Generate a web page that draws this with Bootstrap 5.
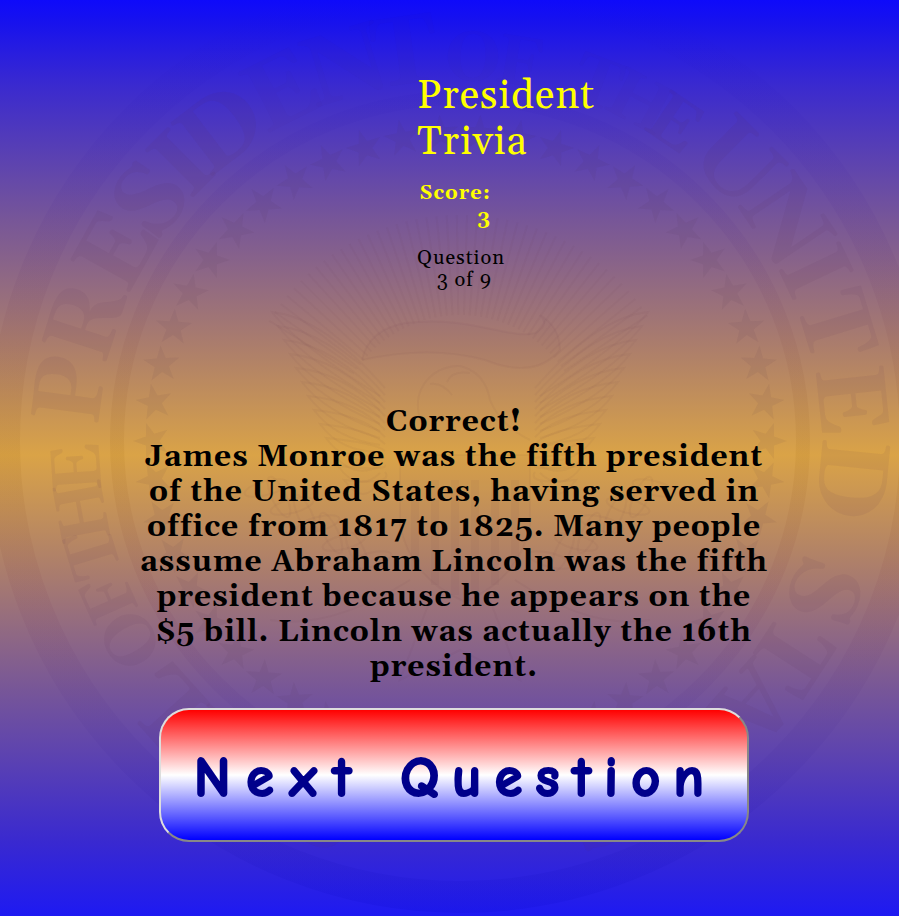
<!DOCTYPE html>
<html lang="en">
<head>
<meta charset="utf-8">
<title>President Trivia</title>
<link href="https://cdn.jsdelivr.net/npm/bootstrap@5.3.0/dist/css/bootstrap.min.css" rel="stylesheet">
<style>
body{min-height:916px;background:linear-gradient(#0e0afa 0,#1611ef 20px,#3929d0 83px,#775698 220px,#ab7d6c 345px,#daa347 455px,#ab7d6c 570px,#775698 690px,#3929d0 842px,#1e1af2 916px);font-family:Georgia,Gelasio,"Liberation Serif",serif;letter-spacing:1px;color:#000;overflow:hidden}
.seal{left:0;top:0;width:899px;height:916px;z-index:0}
.game{z-index:1;padding-top:74px}
.heading-block{width:190px;margin-left:417px}
.heading-block h1{font-size:40px;line-height:46px;letter-spacing:1px;color:#ff0;font-weight:400}
.score{width:74px;margin-top:15px;font-size:20px;line-height:25px;color:#ff0}
.progress-text{width:75px;margin-top:16px;font-size:20px;line-height:22px}
.answer{width:640px;margin:114px 0 0 134px;font-size:30px;line-height:35px}
.next-btn{width:590px;height:134px;margin:23px 0 0 159px;border:2px solid;border-color:#ddd #888 #888 #ddd;border-radius:30px;background:linear-gradient(red,#fff,blue);font-family:"Comic Sans MS","Comic Neue","Comic Relief",Lato,cursive;font-size:56px;font-weight:700;letter-spacing:13.3px;color:#00008b;-webkit-text-stroke:2px #00008b}
.next-btn>span{display:inline-block;padding:5px 0 0 3px}
.wide-word{letter-spacing:15.8px}
</style>
</head>
<body>
<svg class="seal position-absolute" viewBox="0 0 899 916" aria-hidden="true">
<defs>
<linearGradient id="tint" gradientUnits="userSpaceOnUse" x1="0" y1="0" x2="0" y2="916"><stop offset="0" stop-color="#1a10d0" stop-opacity="0"/><stop offset=".1" stop-color="#2a18c0" stop-opacity=".08"/><stop offset=".25" stop-color="#583088" stop-opacity=".1"/><stop offset=".37" stop-color="#804848" stop-opacity=".1"/><stop offset=".5" stop-color="#a87018" stop-opacity=".13"/><stop offset=".64" stop-color="#804050" stop-opacity=".1"/><stop offset=".78" stop-color="#503090" stop-opacity=".1"/><stop offset="1" stop-color="#0808d0" stop-opacity=".16"/></linearGradient>
</defs>
<g fill="none" stroke="url(#tint)"><circle cx="460" cy="441" r="456" stroke-width="32"/><circle cx="460" cy="441" r="343" stroke-width="14"/></g>
<g id="letters" fill="#503050" font-family="Georgia,Gelasio,'Liberation Serif',serif" font-weight="700" text-anchor="middle"></g>
<g id="stars" fill="#503050" fill-opacity=".065"></g>
<g id="eagle" fill="none" stroke="#603850" stroke-opacity=".045" stroke-width="2">
<path fill="#502050" fill-opacity=".02" d="M362 360Q368 330 405 323C470 315 510 340 535 333Q550 325 540 315Q560 327 560 350Q535 380 485 360Q430 345 362 360M400 455H530V525Q520 578 465 602Q410 578 400 525Z"/>
<path d="M425 430C405 395 430 365 460 366Q485 372 490 400Q500 425 530 440M447 382Q452 370 470 373M430 384Q442 382 452 395"/>
<path stroke-width="8" d="M415 480V570M435 480V585M455 480V595M475 480V595M495 480V585M515 480V570"/>
<path d="M410 580Q330 630 270 620M515 580Q590 630 650 620M430 600L400 680L460 650L520 680L490 600"/>
</g>
</svg>
<main class="game position-relative">
<div class="heading-block">
<h1 class="m-0">President Trivia</h1>
<div class="score fw-bold text-end">Score: 3</div>
<div class="progress-text text-end">Question<br>3 of 9</div>
</div>
<div class="answer fw-bold text-center">Correct!<br>James Monroe was the fifth president<br>of the United States, having served in<br>office from 1817 to 1825. Many people<br>assume Abraham Lincoln was the fifth<br>president because he appears on the<br>$5 bill. Lincoln was actually the 16th<br>president.</div>
<button class="next-btn d-block p-0 text-nowrap" type="button"><span><span class="wide-word">Next</span> Question</span></button>
</main>
<script>
const ns='http://www.w3.org/2000/svg';
const make=(tag,parent,attrs)=>{const n=document.createElementNS(ns,tag);for(const k in attrs)n.setAttribute(k,attrs[k]);document.getElementById(parent).append(n);return n};
const ring=[['S',-160],['E',-151],['A',-142],['L',-132],['O',-121,1],['F',-114,1],['T',-107,1],['H',-100.5,1],['E',-94,1],['P',-82.5],['R',-72],['E',-61],['S',-52],['I',-45],['D',-37.5],['E',-27],['N',-17],['T',-8],['O',2,1],['F',9,1],['T',21,1],['H',28,1],['E',34,1],['U',45],['N',56],['I',64.5],['T',73],['E',84],['D',95.5],['S',112.5],['T',123],['A',132],['T',142],['E',151],['S',160]];
for(const [c,a,s] of ring)make('text','letters',{x:460,y:80,'font-size':s?70:98,'fill-opacity':Math.abs(a)<30?.025:.07,transform:`rotate(${a} 460 441)`}).textContent=c;
for(let i=0;i<50;i++){let p='';for(let k=0;k<10;k++){const r=k%2?7.5:19,t=k*Math.PI/5;p+=`${460+r*Math.sin(t)},${133-r*Math.cos(t)} `}make('polygon','stars',{points:p,transform:`rotate(${i*7.2+3.6} 460 441)`})}
// Sun rays behind the eagle
for(let a=-58;a<=58;a+=2.6){const t=a*Math.PI/180,s=Math.sin(t),c=Math.cos(t);make('line','eagle',{x1:460+125*s,y1:440-125*c,x2:460+225*s,y2:440-225*c})}
// Wing and olive-branch feathers, mirrored
for(const m of [1,-1]){
 for(let i=0;i<13;i++){const x=460+m*(188-i*6),y=312+i*14;make('path','eagle',{d:`M${460+m*75} ${388+i*7}Q${x-m*50} ${y+5} ${x} ${y}Q${x-m*20} ${y+28} ${460+m*80} ${396+i*7}`})}
 for(let i=0;i<9;i++)make('ellipse','eagle',{cx:460+m*(90+i*13),cy:560-i*9,rx:22,ry:7,transform:`rotate(${m*(i%2?-65:15)} ${460+m*(90+i*13)} ${560-i*9})`});
}
</script>
<script src="https://cdn.jsdelivr.net/npm/bootstrap@5.3.0/dist/js/bootstrap.bundle.min.js"></script>
</body>
</html>
